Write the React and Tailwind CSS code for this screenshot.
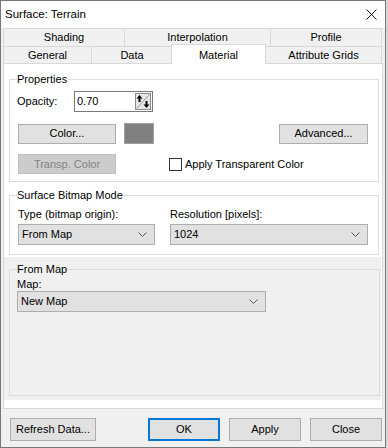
import React from 'react';

const font = { fontFamily: '"Liberation Sans", Arial, sans-serif' };

function Chevron() {
  return (
    <svg width="9" height="5" viewBox="0 0 9 5" className="shrink-0">
      <path d="M0.5 0.5 L4.5 4.5 L8.5 0.5" fill="none" stroke="#555" strokeWidth="1" />
    </svg>
  );
}

function Combo({ value, w }) {
  return (
    <div className={`${w} h-[21px] flex items-center justify-between pl-[3px] pr-[7px] bg-[#e1e1e1] border border-[#adadad]`}>
      <span>{value}</span>
      <Chevron />
    </div>
  );
}

function Btn({ children, w, disabled, primary }) {
  const base = 'flex items-center justify-center bg-[#e1e1e1]';
  if (disabled) {
    return <div className={`${w} h-[20px] flex items-center justify-center bg-[#cccccc] border border-[#bfbfbf] text-[#838383]`}>{children}</div>;
  }
  if (primary) {
    return <div className={`${w} h-[23px] ${base} border-2 border-[#0078d7]`}>{children}</div>;
  }
  return <div className={`${w} ${base} border border-[#adadad]`}>{children}</div>;
}

function Spinner() {
  return (
    <svg width="16" height="17" viewBox="0 0 16 17" className="mr-[1px]">
      <rect x="0.5" y="0.5" width="15" height="16" fill="#e6e6e6" stroke="#8c8c8c" />
      <path d="M1.5 15.5 L14.5 1.5" stroke="#9a9a9a" strokeWidth="1" />
      <path d="M4.5 2 L1.5 5.5 L7.5 5.5 Z" fill="#000" />
      <path d="M4.5 5 L4.5 9" stroke="#000" strokeWidth="2" />
      <path d="M11.5 15 L8.5 11.5 L14.5 11.5 Z" fill="#000" />
      <path d="M11.5 8 L11.5 12" stroke="#000" strokeWidth="2" />
    </svg>
  );
}

function Tab({ label, w, last }) {
  return (
    <div className={`${w} h-full flex items-center justify-center border-l border-t border-[#d9d9d9] ${last ? 'border-r' : ''} bg-[#f0f0f0]`}>
      {label}
    </div>
  );
}

export default function App() {
  return (
    <div className="w-[388px] h-[448px] bg-[#d6d6d6] text-[11px] text-black" style={font}>
      <div className="w-[386px] h-[448px] flex flex-col bg-[#f0f0f0] border border-[#777]">
        {/* title bar */}
        <div className="h-[27px] shrink-0 bg-white flex items-center justify-between pl-[4px] pr-[8px]">
          <span className="text-[11.5px]">Surface: Terrain</span>
          <svg width="11" height="11" viewBox="0 0 11 11">
            <path d="M0.5 0.5 L10.5 10.5 M10.5 0.5 L0.5 10.5" stroke="#111" strokeWidth="1" />
          </svg>
        </div>

        <div className="flex flex-col pl-[2px] pr-[2px]">
          {/* tab rows */}
          <div className="flex h-[18px]">
            <Tab label="Shading" w="w-[121px]" />
            <Tab label="Interpolation" w="w-[146px]" />
            <Tab label="Profile" w="w-[112px]" last />
          </div>
          <div className="flex h-[17px] items-end">
            <Tab label="General" w="w-[88px]" />
            <Tab label="Data" w="w-[81px]" />
            <div className="relative z-10 w-[95px] -ml-[1px] -mr-[1px] h-[20px] -mb-[1px] flex items-start justify-center pt-[2px] bg-white border-l border-t border-r border-[#d9d9d9]">
              Material
            </div>
            <Tab label="Attribute Grids" w="w-[117px]" last />
          </div>

          {/* tab page */}
          <div className="h-[346px] bg-white border border-[#d9d9d9] flex flex-col">
            <fieldset className="mt-[8px] ml-[5px] mr-[3px] border border-[#dcdcdc] pl-[7px] pr-[10px] pb-[7px]">
              <legend className="px-0 leading-[14px]">Properties</legend>
              <div className="flex items-center mt-[5px]">
                <span className="w-[57px]">Opacity:</span>
                <div className="w-[79px] h-[21px] flex items-center justify-between border border-[#7a7a7a] bg-white pl-[2px]">
                  <span>0.70</span>
                  <Spinner />
                </div>
              </div>
              <div className="flex items-center mt-[11px] pl-[1px]">
                <Btn w="w-[98px] h-[20px]">Color...</Btn>
                <div className="ml-[8px] w-[30px] h-[21px] bg-[#808080] border border-[#a0a0a0]" />
                <div className="ml-auto">
                  <Btn w="w-[89px] h-[20px]">Advanced...</Btn>
                </div>
              </div>
              <div className="flex items-center mt-[10px] pl-[1px]">
                <Btn w="w-[98px]" disabled>Transp. Color</Btn>
                <div className="ml-[53px] w-[13px] h-[13px] border border-[#333] bg-white" />
                <span className="ml-[3px]">Apply Transparent Color</span>
              </div>
            </fieldset>

            <fieldset className="mt-[6px] ml-[5px] mr-[3px] border border-[#dcdcdc] pl-[8px] pb-[9px]">
              <legend className="-ml-[1px] px-0 leading-[14px]">Surface Bitmap Mode</legend>
              <div className="flex mt-[5px]">
                <div className="flex flex-col w-[152px]">
                  <span className="leading-[14px]">Type (bitmap origin):</span>
                  <div className="mt-[3px]"><Combo value="From Map" w="w-[137px]" /></div>
                </div>
                <div className="flex flex-col">
                  <span className="leading-[14px]">Resolution [pixels]:</span>
                  <div className="mt-[3px]"><Combo value="1024" w="w-[198px]" /></div>
                </div>
              </div>
            </fieldset>

            <div className="mt-[2px] mr-[1px] h-[143px] bg-[#f0f0f0] pt-[5px]">
              <fieldset className="ml-[5px] mr-[1px] h-[134px] border border-[#dcdcdc] pl-[7px]">
                <legend className="px-0 leading-[14px]">From Map</legend>
                <div className="leading-[14px] mt-[1px]">Map:</div>
                <div><Combo value="New Map" w="w-[249px]" /></div>
              </fieldset>
            </div>
          </div>
        </div>

        {/* bottom buttons */}
        <div className="flex items-center mt-[9px] pl-[9px] pr-[3px]">
          <Btn w="w-[86px] h-[23px]">Refresh Data...</Btn>
          <div className="ml-auto">
            <Btn w="w-[72px]" primary>OK</Btn>
          </div>
          <div className="ml-[9px]"><Btn w="w-[72px] h-[23px]">Apply</Btn></div>
          <div className="ml-[9px]"><Btn w="w-[72px] h-[23px]">Close</Btn></div>
        </div>
      </div>
    </div>
  );
}
